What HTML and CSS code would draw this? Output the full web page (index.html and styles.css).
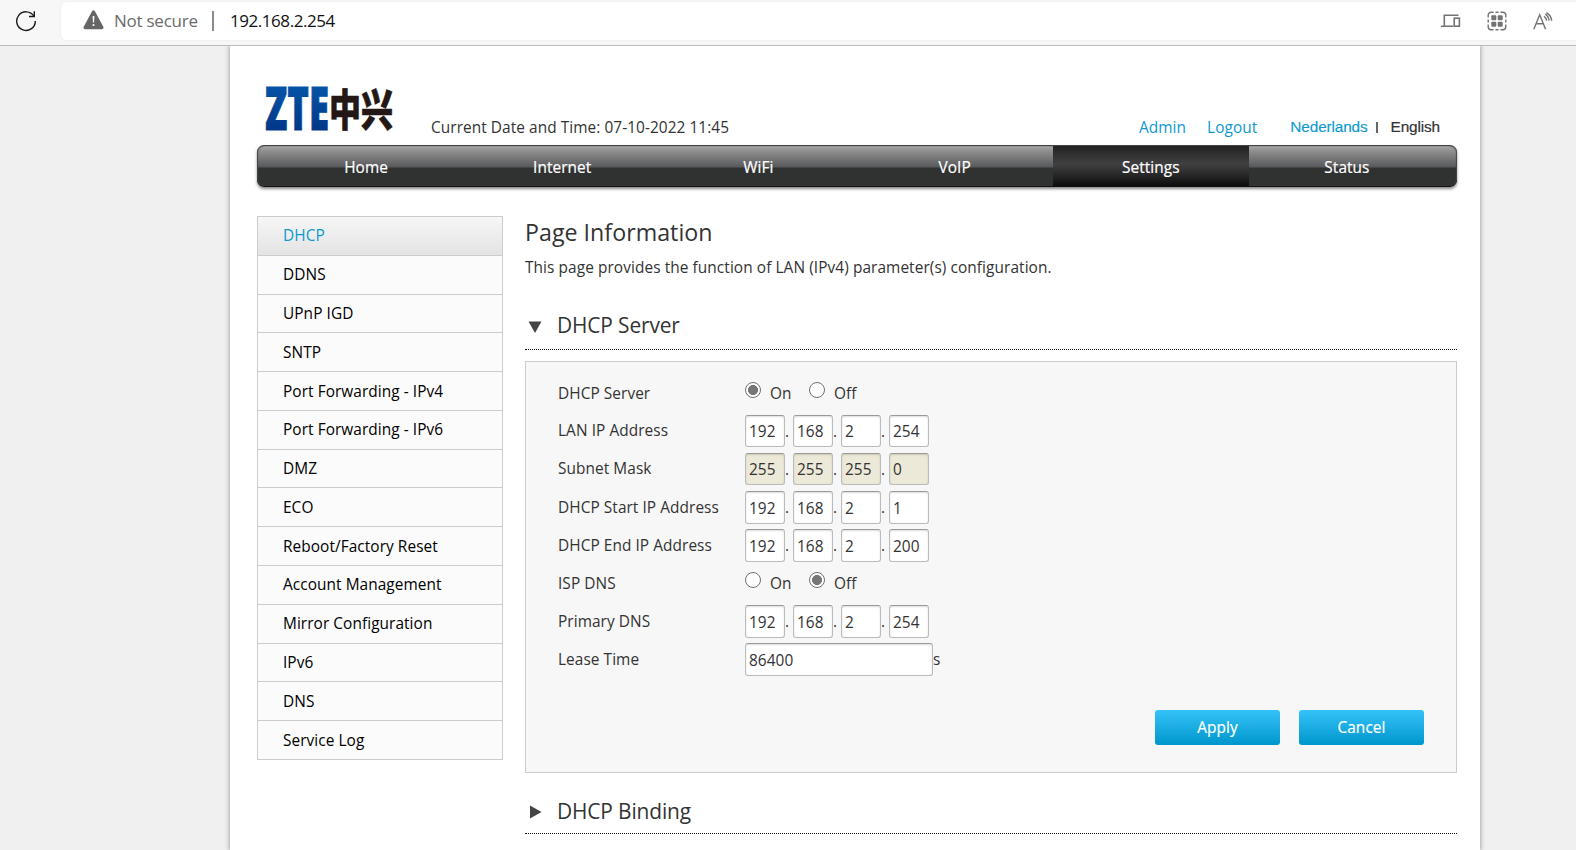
FILE: index.html
```
<!DOCTYPE html>
<html lang="en">
<head>
<meta charset="utf-8">
<title>DHCP settings</title>
<link rel="stylesheet" href="styles.css">
</head>
<body>
<header class="browser">
  <svg class="reload" width="22" height="22" viewBox="0 0 22 22" fill="none" stroke="#1b1b1b" stroke-width="1.4"><path d="M18.9 6.2A9.3 9.3 0 1 0 20.3 11"/><path d="M19.3 1.3v5.2h-5.3"/></svg>
  <div class="address">
    <svg class="warn" width="21" height="20" viewBox="0 0 21 20"><path d="M8.9 1.4q1.6-2.2 3.2 0l8.2 15.4q.8 2.2-1.4 2.4H2.1Q-.1 19 .7 16.800z" fill="#666"/><path d="M9.600 6h1.800l-.3 6.500h-1.200z" fill="#fff"/><circle cx="10.500" cy="15" r="1.100" fill="#fff"/></svg>
    <span class="insecure">Not secure</span>
    <span class="divider"></span>
    <span class="host">192.168.2.254</span>
    <div class="tools">
      <svg width="20" height="16" viewBox="0 0 20 16" fill="none" stroke="#737373" stroke-width="1.600"><path d="M17.500 2.200H3.300V13M0 13.200h12" /><rect x="13.200" y="5.200" width="5.200" height="8"/></svg>
      <svg width="20" height="20" viewBox="0 0 20 20" fill="none" stroke="#737373" stroke-width="1.400"><path d="M1.200 6.500V4.200a3 3 0 0 1 3-3H6.500M8.500 1.200h3M13.500 1.200h2.300a3 3 0 0 1 3 3V6.500M18.800 8.500v3M18.800 13.500v2.300a3 3 0 0 1-3 3H13.500M11.500 18.800h-3M6.500 18.800H4.200a3 3 0 0 1-3-3V13.500M1.200 11.500v-3"/><g fill="#737373" stroke="none"><rect x="4.300" y="4.300" width="5" height="5" rx="1"/><rect x="10.700" y="4.300" width="5" height="5" rx="1"/><rect x="4.300" y="10.700" width="5" height="5" rx="1"/><rect x="10.700" y="10.700" width="5" height="5" rx="1"/></g></svg>
      <svg width="20" height="18" viewBox="0 0 20 18" fill="none" stroke="#737373" stroke-width="1.400"><path d="M.8 17.200 6.700 2.800l5.900 14.400M3 11.800h7.300"/><path d="M11 4.300q2.400 1.500 2.600 4.400M12.200 2.200q3.400 2 3.900 6.500M13.400.6q4.700 2.600 5.300 8.100"/></svg>
    </div>
  </div>
</header>

<div class="page">
  <div class="top">
    <svg class="logo" width="130" height="46" viewBox="0 0 130 46">
      <defs><linearGradient id="brand" x1="0" y1="0" x2="0" y2="1"><stop offset="0.2" stop-color="#0656a8"/><stop offset="0.9" stop-color="#003182"/></linearGradient></defs>
      <text class="logo-latin" transform="scale(1 1.860)" x="1" y="23.300" textLength="64" lengthAdjust="spacingAndGlyphs" fill="url(#brand)" stroke="url(#brand)">ZTE</text>
      <text class="logo-cjk" transform="scale(1 1.360)" x="65" y="28.900" textLength="64" lengthAdjust="spacingAndGlyphs">中兴</text>
    </svg>
    <span class="clock">Current Date and Time: 07-10-2022 11:45</span>
    <div class="account"><a>Admin</a><a>Logout</a></div>
    <div class="lang"><a>Nederlands</a><i></i><b>English</b></div>
  </div>

  <nav class="nav">
    <a>Home</a><a>Internet</a><a>WiFi</a><a>VoIP</a><a class="active">Settings</a><a>Status</a>
  </nav>

  <div class="body">
    <aside class="side">
      <a class="current">DHCP</a><a>DDNS</a><a>UPnP IGD</a><a>SNTP</a><a>Port Forwarding - IPv4</a><a>Port Forwarding - IPv6</a><a>DMZ</a><a>ECO</a><a>Reboot/Factory Reset</a><a>Account Management</a><a>Mirror Configuration</a><a>IPv6</a><a>DNS</a><a>Service Log</a>
    </aside>

    <main class="main">
      <h1>Page Information</h1>
      <p class="intro">This page provides the function of LAN (IPv4) parameter(s) configuration.</p>

      <h2><svg width="14" height="14" viewBox="0 0 14 14"><path d="M.5 1.500h13L7 13z" fill="#444"/></svg>DHCP Server</h2>
      <section class="panel">
        <div class="row radios"><label>DHCP Server</label><span class="radio on"></span><span class="opt">On</span><span class="radio"></span><span class="opt">Off</span></div>
        <div class="row"><label>LAN IP Address</label><span class="box">192</span><em>.</em><span class="box">168</span><em>.</em><span class="box">2</span><em>.</em><span class="box">254</span></div>
        <div class="row off"><label>Subnet Mask</label><span class="box">255</span><em>.</em><span class="box">255</span><em>.</em><span class="box">255</span><em>.</em><span class="box">0</span></div>
        <div class="row low"><label>DHCP Start IP Address</label><span class="box">192</span><em>.</em><span class="box">168</span><em>.</em><span class="box">2</span><em>.</em><span class="box">1</span></div>
        <div class="row low"><label>DHCP End IP Address</label><span class="box">192</span><em>.</em><span class="box">168</span><em>.</em><span class="box">2</span><em>.</em><span class="box">200</span></div>
        <div class="row radios"><label>ISP DNS</label><span class="radio"></span><span class="opt">On</span><span class="radio on"></span><span class="opt">Off</span></div>
        <div class="row low"><label>Primary DNS</label><span class="box">192</span><em>.</em><span class="box">168</span><em>.</em><span class="box">2</span><em>.</em><span class="box">254</span></div>
        <div class="row low"><label>Lease Time</label><span class="box wide">86400</span><span class="unit">s</span></div>
        <div class="actions"><button>Apply</button><button>Cancel</button></div>
      </section>

      <h2 class="collapsed"><svg width="14" height="14" viewBox="0 0 14 14"><path d="M2 .5v13L13.500 7z" fill="#444"/></svg>DHCP Binding</h2>
    </main>
  </div>
</div>
</body>
</html>
```

FILE: styles.css
```
* { box-sizing: border-box; }
body {
  margin: 0;
  height: 850px;
  overflow: hidden;
  display: flex;
  flex-direction: column;
  background: #f0f0f0;
  color: #333;
  font: 15.4px/22px "Open Sans", "Noto Sans", sans-serif;
  letter-spacing: 0.07px;
}

/* Browser toolbar */
.browser {
  height: 46px;
  flex: none;
  display: flex;
  padding-top: 2px;
  background: #f7f7f7;
  border-bottom: 1px solid #bbb;
}
.reload { margin: 8px 24px 0 15px; flex: none; }
.address {
  flex: 1;
  height: 38px;
  display: flex;
  align-items: center;
  padding-left: 22px;
  background: #fff;
  border-radius: 6px 0 0 6px;
  box-shadow: 0 0 3px #e8e8e8;
}
.warn { margin-right: 10px; margin-top: -2px; }
.insecure { width: 98px; font-size: 17px; letter-spacing: -0.25px; color: #6b6b6b; }
.divider { width: 2px; height: 20px; background: #8a8a8a; margin-right: 16px; }
.host { font-size: 17px; letter-spacing: -0.45px; color: #111; }
.tools { margin-left: auto; display: flex; align-items: center; gap: 26px; padding-right: 23px; }

/* Page frame */
.page {
  width: 1250px;
  height: 804px;
  margin-left: 230px;
  padding: 0 23px 0 27px;
  background: #fff;
  box-shadow: 0 0 4px 1px #aaa;
  clip-path: inset(0 -8px 0 -8px);
}
.top { display: flex; height: 99px; padding-left: 7px; align-items: flex-start; }
.logo { margin-top: 41px; overflow: visible; }
.logo-latin { font: 900 32px "Noto Sans", sans-serif; stroke-width: 0.5; letter-spacing: 0; }
.logo-cjk { font: 900 32px "Noto Sans CJK SC", sans-serif; fill: #231815; stroke: #231815; stroke-width: 0.5; letter-spacing: 0; }
.clock { margin: 71px 0 0 37px; }
.account { margin: 71px 33px 0 auto; display: flex; gap: 21px; }
.lang { margin: 70px 17px 0 0; display: flex; align-items: center; font: 15.400px/22px "Liberation Sans", Arial, sans-serif; letter-spacing: -0.15px; }
.lang a, .account a { color: #0d99d0; }
.lang a { -webkit-text-stroke: 0.15px #0d99d0; }
.lang i { width: 2px; height: 11px; background: #666; margin: 0 13px 0 8px; }
.lang b { font-weight: 400; color: #333; -webkit-text-stroke: 0.2px #333; }

/* Main navigation */
.nav {
  height: 42px;
  display: flex;
  padding: 0 12px 0 11px;
  border-radius: 7px;
  border-top: 1px solid #444;
  border-bottom: 1px solid #111;
  background: linear-gradient(#aaa 0, #929292 4px, #58595b 21px, #303231 22px, #303231 100%);
  box-shadow: inset 1px 0 1px #444, inset -1px 0 1px #444, 0 2px 3px #888;
}
.nav a { flex: 1; text-align: center; line-height: 43px; height: 40px; color: #fff; -webkit-text-stroke: 0.2px #fff; }
.nav .active { background: linear-gradient(#222, #404040 45%, #333 60%, #0c0c0c); }

.body { display: flex; gap: 22px; padding-top: 29px; }

/* Side menu */
.side {
  width: 246px;
  height: 544px;
  display: flex;
  flex-direction: column;
  border: 1px solid #ccc;
  border-bottom: 0;
  background: #fbfbfb;
  color: #000;
}
.side a {
  flex: 1;
  display: flex;
  align-items: center;
  padding: 1px 0 0 25px;
  border-bottom: 1px solid #ccc;
}
.side .current { color: #0d99d0; background: linear-gradient(#f6f6f6, #e3e3e3); }

/* Content */
.main { flex: 1; padding-left: 0; }
h1 { margin: 0; font-weight: 400; font-size: 23.200px; line-height: 32px; letter-spacing: 0.03px; }
.intro { margin: 9px 0 0; letter-spacing: 0.085px; }
h2 {
  height: 49px;
  margin: 22px 0 0;
  padding: 8px 0 0 3px;
  display: flex;
  align-items: flex-start;
  gap: 15px;
  border-bottom: 1px dotted #111;
  font-weight: 400;
  font-size: 20.900px;
  line-height: 32px;
  letter-spacing: -0.13px;
}
h2 svg { margin-top: 11px; }
.collapsed { margin-top: 12px; padding-top: 10px; }
.collapsed svg { margin-top: 10px; }
.panel {
  height: 412px;
  margin-top: 11px;
  padding: 12px 32px 0;
  border: 1px solid #ccc;
  background: #f7f7f7;
}
.row { height: 38px; display: flex; align-items: center; }
.row label { width: 187px; }
.radios label, .opt, .low label { padding-top: 2px; }
.row em { width: 8px; padding: 2px 0 0; font-style: normal; }
.box {
  width: 40px;
  height: 32px;
  padding-left: 3px;
  line-height: 31px;
  background: #fff;
  border: 1px solid #bbb;
  border-top-color: #999;
  border-radius: 3px;
  box-shadow: inset 0 1px 2px #ddd;
}
.low .box { height: 33px; line-height: 33px; }
.wide { width: 188px; }
.unit { padding-top: 2px; }
.off .box { background: #ece9d8; box-shadow: inset 0 1px 2px #ccc8b8; }
.radio {
  width: 16px;
  height: 16px;
  margin-top: -6px;
  border: 1px solid #707070;
  border-radius: 50%;
  background: #fff;
}
.radio.on { background: radial-gradient(circle, #767676 4.700px, #fff 5.300px); }
.opt { width: 39px; margin-left: 9px; }
.actions { display: flex; justify-content: flex-end; gap: 19px; margin-top: 32px; }
button {
  width: 125px;
  height: 35px;
  padding: 0;
  border: 0;
  border-radius: 3px;
  background: linear-gradient(#34c3f8, #0096cc);
  color: #fff;
  font: inherit;
  letter-spacing: inherit;
  -webkit-text-stroke: 0.2px #fff;
}
```
